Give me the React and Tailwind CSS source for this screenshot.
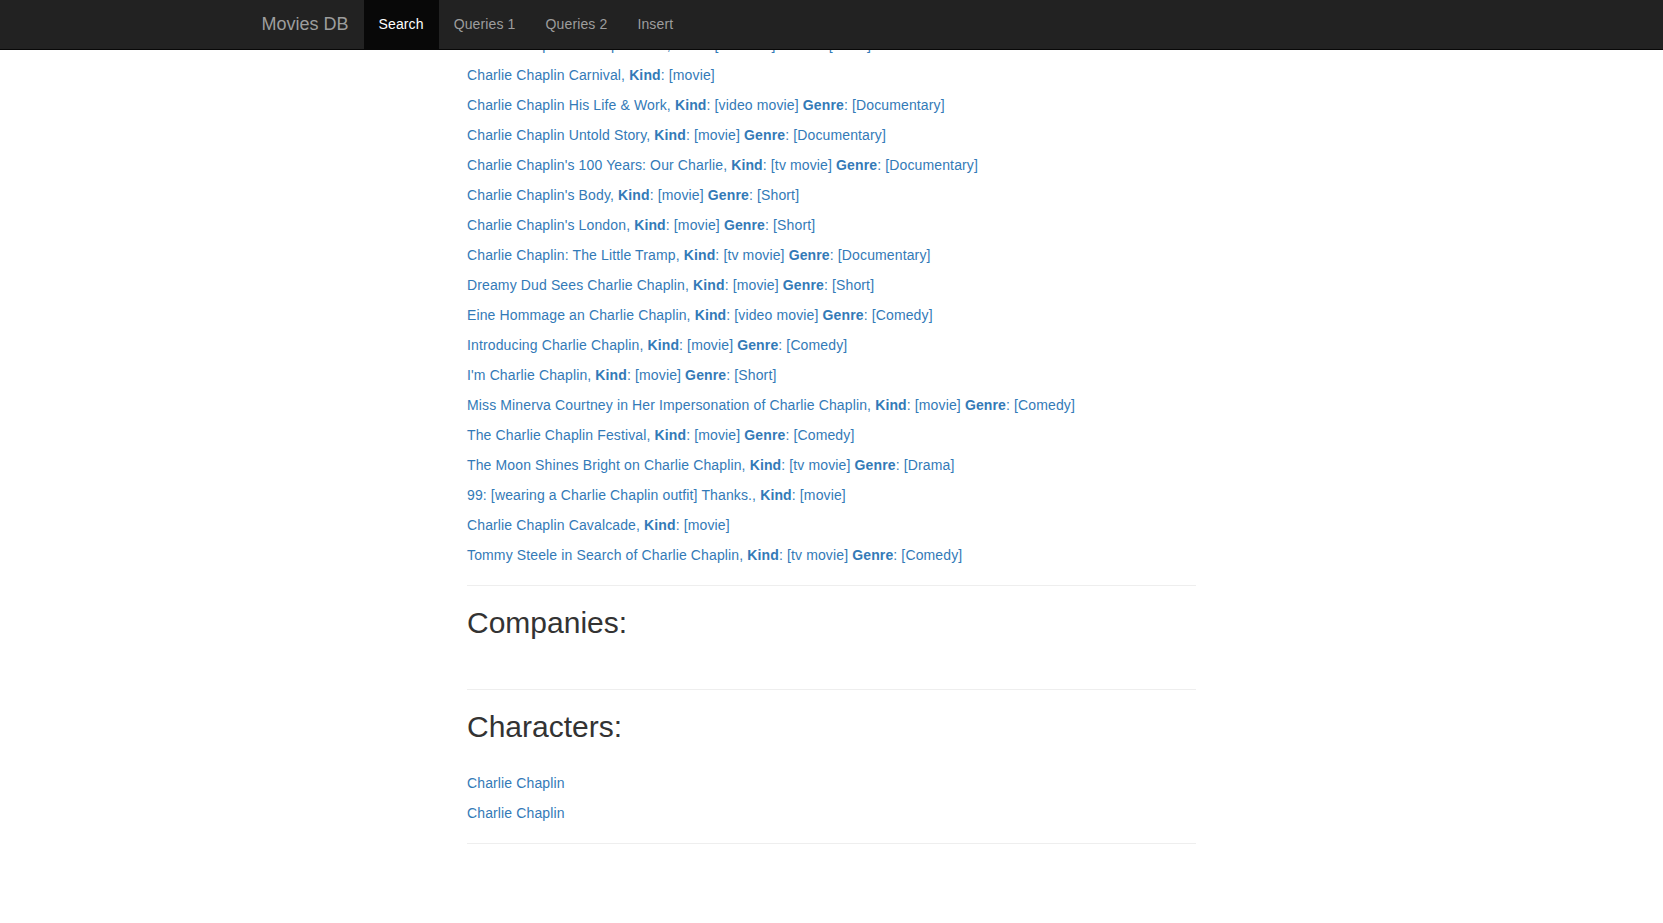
const rows = [
  { title: "Charlie Chaplin's Tramp Tribute", kind: 'tv movie', genre: 'Short' },
  { title: 'Charlie Chaplin Carnival', kind: 'movie' },
  { title: 'Charlie Chaplin His Life & Work', kind: 'video movie', genre: 'Documentary' },
  { title: 'Charlie Chaplin Untold Story', kind: 'movie', genre: 'Documentary' },
  { title: "Charlie Chaplin's 100 Years: Our Charlie", kind: 'tv movie', genre: 'Documentary' },
  { title: "Charlie Chaplin's Body", kind: 'movie', genre: 'Short' },
  { title: "Charlie Chaplin's London", kind: 'movie', genre: 'Short' },
  { title: 'Charlie Chaplin: The Little Tramp', kind: 'tv movie', genre: 'Documentary' },
  { title: 'Dreamy Dud Sees Charlie Chaplin', kind: 'movie', genre: 'Short' },
  { title: 'Eine Hommage an Charlie Chaplin', kind: 'video movie', genre: 'Comedy' },
  { title: 'Introducing Charlie Chaplin', kind: 'movie', genre: 'Comedy' },
  { title: "I'm Charlie Chaplin", kind: 'movie', genre: 'Short' },
  { title: 'Miss Minerva Courtney in Her Impersonation of Charlie Chaplin', kind: 'movie', genre: 'Comedy' },
  { title: 'The Charlie Chaplin Festival', kind: 'movie', genre: 'Comedy' },
  { title: 'The Moon Shines Bright on Charlie Chaplin', kind: 'tv movie', genre: 'Drama' },
  { title: '99: [wearing a Charlie Chaplin outfit] Thanks.', kind: 'movie' },
  { title: 'Charlie Chaplin Cavalcade', kind: 'movie' },
  { title: 'Tommy Steele in Search of Charlie Chaplin', kind: 'tv movie', genre: 'Comedy' },
]

const characters = ['Charlie Chaplin', 'Charlie Chaplin']

const navItems = ['Search', 'Queries 1', 'Queries 2', 'Insert']

export default function App() {
  return (
    <div className="min-h-[923px] bg-white text-[14px] tracking-[0.13px] text-[#333] font-['Liberation_Sans',Arial,sans-serif]">
      {/* Navbar */}
      <nav className="fixed top-0 left-0 right-0 z-10 h-[50px] bg-[#222] border-b border-[#080808]">
        <div className="w-[1170px] mx-auto px-[15px] flex h-full">
          <a href="#" className="-ml-[15px] px-[15px] h-[48px] flex items-center text-[18px] leading-[20px] tracking-normal text-[#9d9d9d]">
            Movies DB
          </a>
          <ul className="flex h-[49px]">
            {navItems.map((item, i) => (
              <li key={item}>
                <a
                  href="#"
                  className={
                    i === 0
                      ? 'px-[15px] h-full pb-[2px] flex items-center leading-[20px] text-white bg-[#080808]'
                      : 'px-[15px] h-full pb-[2px] flex items-center leading-[20px] text-[#9d9d9d]'
                  }
                >
                  {item}
                </a>
              </li>
            ))}
          </ul>
        </div>
      </nav>

      {/* Results */}
      <div className="w-[729px] mx-auto pt-[35px] flex flex-col">
        <div className="flex flex-col gap-[10px]">
          {rows.map((r, i) => (
            <a key={i} href="#" className="block h-[20px] leading-[20px] text-[#337ab7] whitespace-nowrap">
              {r.title}, <b>Kind</b>: [{r.kind}]
              {r.genre && (
                <>
                  {' '}<b>Genre</b>: [{r.genre}]
                </>
              )}
            </a>
          ))}
        </div>

        <hr className="mt-[20px] mb-[20px] border-0 border-t border-[#eee]" />
        <h2 className="text-[30px] leading-[33px] tracking-normal text-[#333]">Companies:</h2>
        <div className="h-[30px]" />

        <hr className="mt-[20px] mb-[20px] border-0 border-t border-[#eee]" />
        <h2 className="text-[30px] leading-[33px] tracking-normal text-[#333]">Characters:</h2>
        <div className="mt-[30px] flex flex-col gap-[10px]">
          {characters.map((c, i) => (
            <a key={i} href="#" className="block h-[20px] leading-[20px] text-[#337ab7]">
              {c}
            </a>
          ))}
        </div>
        <hr className="mt-[20px] mb-[20px] border-0 border-t border-[#eee]" />
      </div>
    </div>
  )
}
